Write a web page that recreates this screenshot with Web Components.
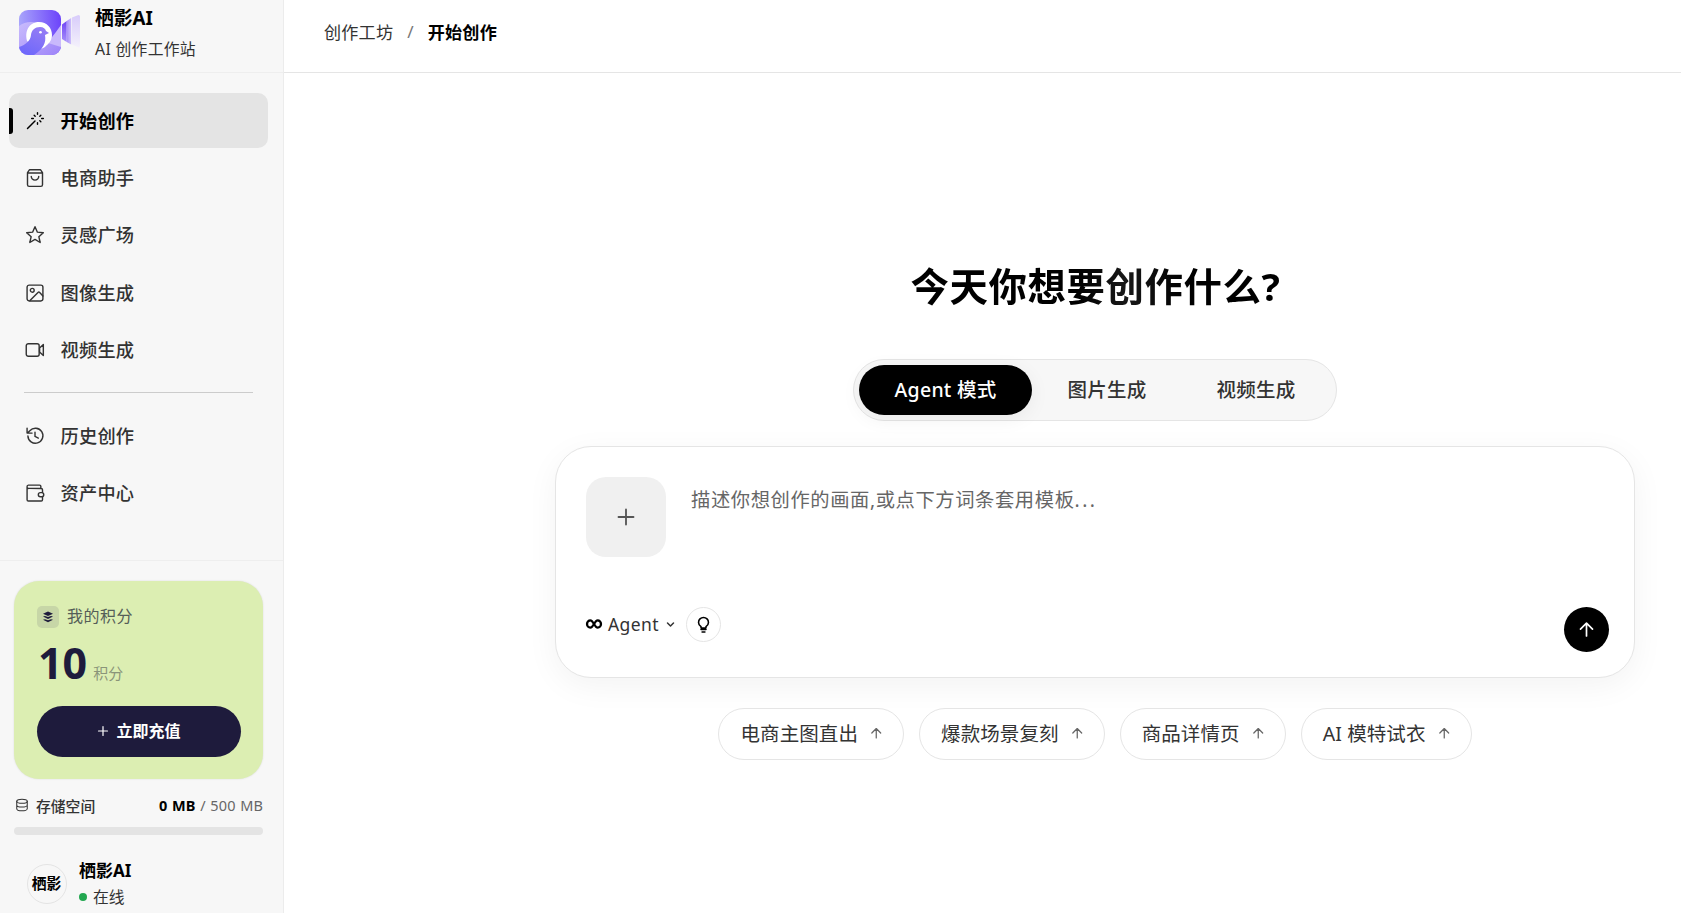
<!DOCTYPE html>
<html lang="zh-CN">
<head>
<meta charset="utf-8">
<title>栖影AI</title>
<style>
  body {
    margin: 0;
    font-family: "Noto Sans", "Noto Sans CJK SC", sans-serif;
    color: #333;
  }
</style>
</head>
<body>
<studio-app></studio-app>

<script>
const ICONS = {
  wand: '<path d="M15 4V2M15 16v-2M8 9h2M20 9h2M17.8 11.8 19 13M17.8 6.2 19 5M3 21l9-9M12.2 6.2 11 5"/>',
  bag: '<path d="M5.5 2h13L21 5.5V20a2 2 0 0 1-2 2H5a2 2 0 0 1-2-2V5.5zM3 6h18M16.5 10a4.5 4.5 0 0 1-9 0"/>',
  star: '<path d="m12 2 2.9 6.6 7.1.7-5.4 4.7 1.6 7L12 17.3 5.8 21l1.6-7L2 9.3l7.1-.7z"/>',
  image: '<rect x="2.5" y="2.5" width="19" height="19" rx="2.5"/><circle cx="8.7" cy="8.7" r="2.3"/><path d="M6 21 15.6 11.3a1.5 1.5 0 0 1 2 0L21.5 15.5"/>',
  video: '<rect x="1.5" y="4.5" width="15.5" height="15" rx="2.5"/><path d="m17.5 9.5 4.5-4v13l-4.5-4z"/>',
  history: '<path d="M3.5 12a9 9 0 1 0 2.3-6.3L3 8.5M2.5 2.5v6h6M12 7.5v5l4 2"/>',
  wallet: '<path d="M19 6.5V4a1.5 1.5 0 0 0-1.5-1.5H4A1.7 1.7 0 0 0 2.5 4.3V20A1.5 1.5 0 0 0 4 21.5h15.5A1.5 1.5 0 0 0 21 20v-3.5M2.5 5A1.7 1.7 0 0 0 4.2 6.5H19.5A1.5 1.5 0 0 1 21 8v3.5"/><rect x="16" y="11.5" width="6.5" height="5" rx="2.5"/>',
  layers: '<path fill="currentColor" d="m12 1 10 4.5-10 4.5L2 5.5z"/><path fill="currentColor" d="m2 11 4-1.2 6 2.2 6-2.2 4 1.2-10 5zM2 17.5l4-1.2 6 2.2 6-2.2 4 1.2-10 5z"/>',
  plus: '<path d="M12 3v18M3 12h18"/>',
  database: '<ellipse cx="12" cy="5.5" rx="9" ry="3.5"/><path d="M3 5.5v13c0 2 4 3.5 9 3.5s9-1.5 9-3.5v-13M3 12c0 2 4 3.5 9 3.5s9-1.5 9-3.5"/>',
  infinity: '<path d="M12 12C10 8.5 8.5 6.5 6.5 6.5a5 5.5 0 0 0 0 11c2 0 3.5-2 5.5-5.5s3.5-5.5 5.5-5.5a5 5.5 0 0 1 0 11c-2 0-3.5-2-5.5-5.5z"/>',
  chevron: '<path d="m4 8 8 8 8-8"/>',
  bulb: '<path d="M8.5 17v-2C6.5 13.5 5 11.5 5 9a7 7 0 0 1 14 0c0 2.5-1.5 4.5-3.5 6v2zM8.5 19h7M10 22.5h4"/>',
  arrow: '<path d="M12 21V3M3.5 11.5 12 3l8.5 8.5"/>'
};

class UiIcon extends HTMLElement {
  constructor() {
    super();
    this.attachShadow({ mode: 'open' });
  }

  connectedCallback() {
    const size = this.getAttribute('size') || 20;
    const stroke = this.getAttribute('stroke') || 1.7;
    this.shadowRoot.innerHTML = `
      <style>
        :host { display: block; flex: none; width: ${size}px; height: ${size}px; }
        svg { display: block; overflow: visible; }
      </style>
      <svg width="${size}" height="${size}" viewBox="0 0 24 24" fill="none" stroke="currentColor"
        stroke-width="${stroke}" stroke-linecap="round" stroke-linejoin="round">${ICONS[this.getAttribute('name')]}</svg>
    `;
  }
}

class BrandLogo extends HTMLElement {
  constructor() {
    super();
    this.attachShadow({ mode: 'open' });
    this.shadowRoot.innerHTML = `
      <style>
        :host { display: block; flex: none; width: 62px; height: 46px; }
        svg { display: block; }
      </style>
      <svg width="62" height="46" viewBox="0 0 62 46">
        <defs>
          <linearGradient id="box" x1="0" y1="0.3" x2="1" y2="0.2">
            <stop offset="0" stop-color="#a9a6fb"/><stop offset="1" stop-color="#6c43fa"/>
          </linearGradient>
          <linearGradient id="bird" x1="0.8" y1="0" x2="0.3" y2="1">
            <stop offset="0" stop-color="#967df4"/><stop offset="1" stop-color="#6f68fb"/>
          </linearGradient>
          <linearGradient id="fade" x1="0" y1="0" x2="1" y2="1">
            <stop offset="0" stop-color="#c9bcfc"/><stop offset="1" stop-color="#9d83f9"/>
          </linearGradient>
          <linearGradient id="lens" x1="0" y1="0" x2="0" y2="1">
            <stop offset="0" stop-color="#6f45f5"/><stop offset="1" stop-color="#a78ffa"/>
          </linearGradient>
          <linearGradient id="mid" x1="0" y1="0" x2="1" y2="0">
            <stop offset="0" stop-color="#a88ffa"/><stop offset="1" stop-color="#cdbffb"/>
          </linearGradient>
          <linearGradient id="pale" x1="0" y1="0" x2="0" y2="1">
            <stop offset="0" stop-color="#d8ccfb"/><stop offset="1" stop-color="#f4f1fb"/>
          </linearGradient>
          <clipPath id="clip"><rect width="42" height="45" rx="9"/></clipPath>
        </defs>
        <g clip-path="url(#clip)">
          <rect width="42" height="45" fill="url(#box)"/>
          <path d="M0 16C5 12 12 11 18 13l15 14 9-10v28H0z" fill="url(#fade)"/>
          <path d="M42 15 29 33l13 4z" fill="#c9b9fc"/>
          <path d="M8 31C5 19 12 12 20 12c8 0 13 6 13 13 0 6-4 9-7 12-3 2-6 2-8 2z" fill="#fff"/>
          <path d="M0 37C6 35 11.500 31 12 25c.5-5 4-8 9-8 3.500 0 5.500 2 6 4l3 2-4 2c1.500 8-2 14-11 20H0z" fill="url(#bird)"/>
          <circle cx="21.5" cy="22.3" r="1.3" fill="#fff"/>
        </g>
        <path d="M43 14.5l4.7-3.5v21L43 29z" fill="url(#lens)"/>
        <path d="M47.7 11l4.5-3v26.5l-4.5-2.5z" fill="url(#mid)"/>
        <path d="M53 7.5l6.500-2.500q1.500 0 1.500 1.500V36q0 2-1.500 1.500L53 34.500z" fill="url(#pale)"/>
      </svg>
    `;
  }
}

class NavItem extends HTMLElement {
  constructor() {
    super();
    this.attachShadow({ mode: 'open' });
  }

  connectedCallback() {
    this.shadowRoot.innerHTML = `
      <style>
        :host {
          align-items: center;
          border-radius: 10px;
          box-sizing: border-box;
          color: #333;
          cursor: pointer;
          display: flex;
          font-size: 18.2px;
          font-weight: 500;
          gap: 15.5px;
          height: 55px;
          letter-spacing: 0.25px;
          line-height: 24px;
          padding: 0 0 0 16px;
          position: relative;
        }

        :host([active]) {
          background: #e4e4e4;
          color: #000;
          font-weight: 700;
        }

        :host([active])::before {
          background: #000;
          border-radius: 0 3px 3px 0;
          content: "";
          height: 26px;
          left: 0;
          position: absolute;
          top: 15px;
          width: 4px;
        }
      </style>
      <ui-icon name="${this.getAttribute('icon')}"></ui-icon>
      <slot></slot>
    `;
  }
}

class PointsCard extends HTMLElement {
  constructor() {
    super();
    this.attachShadow({ mode: 'open' });
    this.shadowRoot.innerHTML = `
      <style>
        :host {
          background: #dceeb2;
          border-radius: 25px;
          box-shadow: 0 0 2px rgba(0, 0, 0, 0.12);
          box-sizing: border-box;
          color: #1e1b3c;
          display: block;
          height: 198px;
          padding: 25px 22px 0 23px;
        }

        .head {
          align-items: center;
          color: #555e58;
          display: flex;
          font-size: 16px;
          gap: 8px;
          height: 22px;
          letter-spacing: 0.5px;
          line-height: 20px;
        }

        .head label {
          margin-top: -3px;
        }

        .badge {
          background: #c7d6a7;
          border-radius: 5px;
          color: #1e1b3c;
          display: grid;
          height: 22px;
          place-items: center;
          width: 22px;
        }

        .total {
          align-items: baseline;
          display: flex;
          gap: 6px;
          height: 50px;
          line-height: 50px;
          margin: 10px 0 0 1px;
        }

        .total b {
          font-size: 43px;
        }

        .total span {
          color: #8a9479;
          font-size: 15px;
        }

        button {
          align-items: center;
          background: #1e1b3c;
          border: 0;
          border-radius: 26px;
          color: #fff;
          display: flex;
          font: 700 16px "Noto Sans", "Noto Sans CJK SC", sans-serif;
          gap: 7px;
          height: 51px;
          justify-content: center;
          margin-top: 18px;
          padding: 0 0 3px;
          width: 100%;
        }

        button ui-icon {
          margin-top: 2px;
        }
      </style>
      <div class="head"><span class="badge"><ui-icon name="layers" size="12" stroke="0"></ui-icon></span><label>我的积分</label></div>
      <div class="total"><b>10</b><span>积分</span></div>
      <button><ui-icon name="plus" size="12" stroke="2.4"></ui-icon>立即充值</button>
    `;
  }
}

class SideBar extends HTMLElement {
  constructor() {
    super();
    this.attachShadow({ mode: 'open' });
    this.shadowRoot.innerHTML = `
      <style>
        :host {
          background: #f7f7f7;
          border-right: 1px solid #ececec;
          box-sizing: border-box;
          display: flex;
          flex-direction: column;
          height: 100vh;
          overflow: hidden;
          width: 284px;
        }

        .brand {
          border-bottom: 1px solid #eee;
          box-sizing: border-box;
          display: flex;
          flex: none;
          gap: 14px;
          height: 73px;
          padding: 10px 0 0 19px;
        }

        .brand b {
          color: #000;
          display: block;
          font-size: 18.8px;
          line-height: 24px;
          margin-top: -4px;
        }

        .brand span {
          display: block;
          font-size: 15.8px;
          letter-spacing: 0.3px;
          line-height: 24px;
          margin-top: 7px;
        }

        nav {
          display: flex;
          flex: 1;
          flex-direction: column;
          gap: 2.4px;
          padding: 20px 15px 0 9px;
        }

        hr {
          border: 0;
          border-top: 1px solid #ccc;
          margin: 12px 15px 13px;
          width: 229px;
        }

        footer {
          border-top: 1px solid #eee;
          box-sizing: border-box;
          flex: none;
          height: 353px;
          padding: 20px 20px 0 14px;
        }

        .storage {
          align-items: center;
          display: flex;
          font-size: 14.8px;
          height: 24px;
          margin-top: 14px;
        }

        .storage ui-icon {
          margin: 0 7px 0 1px;
        }

        .storage strong {
          font-weight: 500;
        }

        .used {
          color: #666;
          font-size: 14.5px;
          letter-spacing: 0.1px;
          margin-left: auto;
          word-spacing: 0.8px;
        }

        .used b {
          color: #000;
        }

        .bar {
          background: #e4e4e4;
          border-radius: 4px;
          height: 8px;
          margin-top: 10px;
        }

        .user {
          align-items: center;
          display: flex;
          gap: 12px;
          margin: 22px 0 0 13px;
        }

        .avatar {
          border: 1px solid #e4e4e4;
          border-radius: 50%;
          box-sizing: border-box;
          color: #000;
          display: grid;
          font-size: 14.8px;
          font-weight: 700;
          height: 40px;
          place-content: center;
          line-height: 20px;
          padding: 0 1px 1px 0;
          white-space: nowrap;
          width: 40px;
        }

        .user b {
          color: #000;
          display: block;
          font-size: 17px;
          line-height: 27px;
        }

        .online {
          align-items: center;
          display: flex;
          font-size: 15.8px;
          gap: 6px;
          line-height: 26px;
        }

        .online i {
          background: #22a750;
          border-radius: 50%;
          height: 8px;
          width: 8px;
        }
      </style>
      <div class="brand">
        <brand-logo></brand-logo>
        <div><b>栖影AI</b><span>AI 创作工作站</span></div>
      </div>
      <nav>
        <nav-item icon="wand" active>开始创作</nav-item>
        <nav-item icon="bag">电商助手</nav-item>
        <nav-item icon="star">灵感广场</nav-item>
        <nav-item icon="image">图像生成</nav-item>
        <nav-item icon="video">视频生成</nav-item>
        <hr>
        <nav-item icon="history">历史创作</nav-item>
        <nav-item icon="wallet">资产中心</nav-item>
      </nav>
      <footer>
        <points-card></points-card>
        <div class="storage">
          <ui-icon name="database" size="14" stroke="1.8"></ui-icon>
          <strong>存储空间</strong>
          <span class="used"><b>0 MB</b> / 500 MB</span>
        </div>
        <div class="bar"></div>
        <div class="user">
          <div class="avatar">栖影</div>
          <div><b>栖影AI</b><div class="online"><i></i>在线</div></div>
        </div>
      </footer>
    `;
  }
}

class ModeTabs extends HTMLElement {
  constructor() {
    super();
    this.attachShadow({ mode: 'open' });
    this.shadowRoot.innerHTML = `
      <style>
        :host {
          background: #f7f7f7;
          border: 1px solid #e5e5e5;
          border-radius: 31px;
          box-sizing: border-box;
          display: flex;
          font-size: 19.5px;
          height: 62px;
          letter-spacing: 0.25px;
          padding: 5px;
          width: 484px;
        }

        span {
          align-items: center;
          border-radius: 25px;
          box-sizing: border-box;
          display: flex;
          font-weight: 500;
          height: 50px;
          justify-content: center;
          padding: 0 0 3px 1px;
          width: 149px;
        }

        .current {
          background: #000;
          box-shadow: 0 4px 20px rgba(0, 0, 0, 0.06);
          color: #fff;
          padding-left: 0;
          width: 173px;
        }
      </style>
      <span class="current">Agent 模式</span>
      <span>图片生成</span>
      <span>视频生成</span>
    `;
  }
}

class PromptBox extends HTMLElement {
  constructor() {
    super();
    this.attachShadow({ mode: 'open' });
    this.shadowRoot.innerHTML = `
      <style>
        :host {
          background: #fff;
          border: 1px solid #e5e5e5;
          border-radius: 36px;
          box-shadow: 0 8px 32px rgba(0, 0, 0, 0.05);
          box-sizing: border-box;
          display: flex;
          flex-direction: column;
          height: 232px;
          justify-content: space-between;
          padding: 30px 25px 25px 30px;
          width: 100%;
        }

        .top {
          display: flex;
          gap: 25px;
        }

        .upload {
          background: #f0f0f0;
          border-radius: 20px;
          color: #555;
          display: grid;
          height: 80px;
          place-items: center;
          width: 80px;
        }

        .hint {
          color: #666;
          font-size: 19.3px;
          letter-spacing: 0.6px;
          line-height: 28px;
          padding-top: 9px;
        }

        .hint span {
          letter-spacing: 2.5px;
        }

        .bottom {
          align-items: flex-start;
          display: flex;
        }

        .agent {
          align-items: center;
          display: flex;
          font-size: 17.5px;
          height: 34px;
          letter-spacing: 0.4px;
        }

        .agent span {
          margin: 0 7px 0 6px;
        }

        .agent ui-icon:first-child {
          color: #000;
        }

        .bulb {
          border: 1px solid #e5e5e5;
          border-radius: 50%;
          box-sizing: border-box;
          color: #000;
          display: grid;
          height: 35px;
          margin-left: 11px;
          place-items: center;
          width: 35px;
        }

        .send {
          background: #000;
          border-radius: 50%;
          color: #fff;
          display: grid;
          height: 45px;
          margin-left: auto;
          place-items: center;
          width: 45px;
        }
      </style>
      <div class="top">
        <div class="upload"><ui-icon name="plus" size="20" stroke="2.2"></ui-icon></div>
        <div class="hint">描述你想创作的画面,或点下方词条套用模板<span>...</span></div>
      </div>
      <div class="bottom">
        <div class="agent">
          <ui-icon name="infinity" size="16" stroke="3.4"></ui-icon>
          <span>Agent</span>
          <ui-icon name="chevron" size="9" stroke="4"></ui-icon>
        </div>
        <div class="bulb"><ui-icon name="bulb" size="17" stroke="2.2"></ui-icon></div>
        <div class="send"><ui-icon name="arrow" size="17" stroke="2.4"></ui-icon></div>
      </div>
    `;
  }
}

class PromptChip extends HTMLElement {
  constructor() {
    super();
    this.attachShadow({ mode: 'open' });
    this.shadowRoot.innerHTML = `
      <style>
        :host {
          align-items: center;
          border: 1px solid #e5e5e5;
          border-radius: 26px;
          box-sizing: border-box;
          display: flex;
          font-size: 19.5px;
          gap: 12px;
          height: 52px;
          letter-spacing: 0.1px;
          padding: 0 20.5px 3px 21px;
        }

        ui-icon {
          color: #666;
          margin-top: 1px;
        }
      </style>
      <slot></slot>
      <ui-icon name="arrow" size="12.5" stroke="2.4"></ui-icon>
    `;
  }
}

class StudioApp extends HTMLElement {
  constructor() {
    super();
    this.attachShadow({ mode: 'open' });
    this.shadowRoot.innerHTML = `
      <style>
        :host {
          display: grid;
          grid-template-columns: 284px 1fr;
          height: 100vh;
          overflow: hidden;
        }

        header {
          align-items: center;
          border-bottom: 1px solid #e5e5e5;
          box-sizing: border-box;
          display: flex;
          font-size: 17.1px;
          height: 73px;
          letter-spacing: 0.2px;
          padding: 0 0 10px 40px;
        }

        header i {
          color: #777;
          font-style: normal;
          margin: 0 14px;
        }

        header b {
          color: #000;
        }

        main {
          align-items: center;
          display: flex;
          flex-direction: column;
          padding: 183px 46px 0 271px;
        }

        h1 {
          background: linear-gradient(90deg, #000, #000 45%, #181818 58%, #000 75%);
          background-clip: text;
          color: transparent;
          font-size: 38.4px;
          font-weight: 700;
          letter-spacing: 0.6px;
          line-height: 60px;
          margin: 0 0 43px 1px;
        }

        prompt-box {
          margin: 25px 0 30px;
        }

        .chips {
          display: flex;
          gap: 15px;
        }
      </style>
      <side-bar></side-bar>
      <div>
        <header>创作工坊<i>/</i><b>开始创作</b></header>
        <main>
          <h1>今天你想要创作什么?</h1>
          <mode-tabs></mode-tabs>
          <prompt-box></prompt-box>
          <div class="chips">
            <prompt-chip>电商主图直出</prompt-chip>
            <prompt-chip>爆款场景复刻</prompt-chip>
            <prompt-chip>商品详情页</prompt-chip>
            <prompt-chip>AI 模特试衣</prompt-chip>
          </div>
        </main>
      </div>
    `;
  }
}

customElements.define('ui-icon', UiIcon);
customElements.define('brand-logo', BrandLogo);
customElements.define('nav-item', NavItem);
customElements.define('points-card', PointsCard);
customElements.define('side-bar', SideBar);
customElements.define('mode-tabs', ModeTabs);
customElements.define('prompt-box', PromptBox);
customElements.define('prompt-chip', PromptChip);
customElements.define('studio-app', StudioApp);
</script>
</body>
</html>
